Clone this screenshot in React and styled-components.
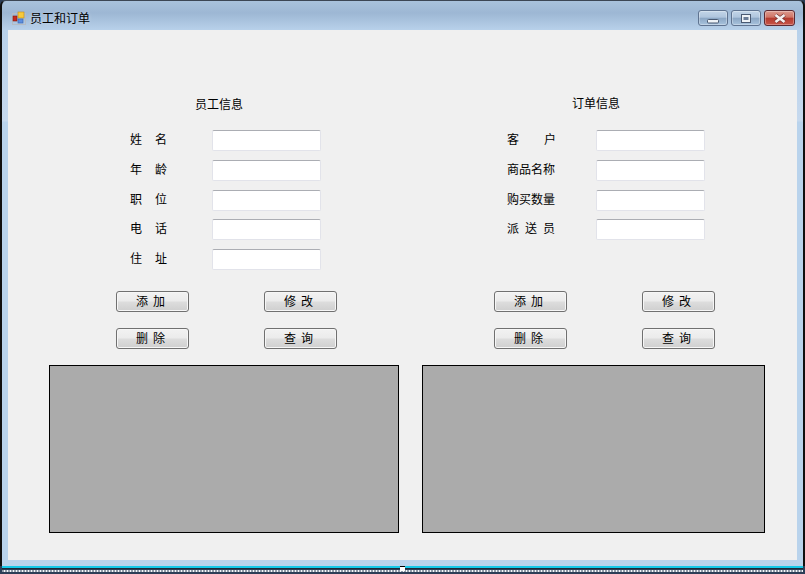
import React from "react";
import styled, { createGlobalStyle } from "styled-components";

const Global = createGlobalStyle`
  html, body {
    margin: 0;
    padding: 0;
    background: #fff;
  }
  body {
    width: 805px;
    height: 574px;
    overflow: hidden;
    font-family: "Noto Sans CJK SC", "Liberation Sans", sans-serif;
    font-size: 12px;
    color: #000;
  }
`;

const employeeFields = [
  { label: "姓名", track: 13 },
  { label: "年龄", track: 13 },
  { label: "职位", track: 13, tight: true },
  { label: "电话", track: 13 },
  { label: "住址", track: 13 },
];

const orderFields = [
  { label: "客户", track: 25 },
  { label: "商品名称", track: 0 },
  { label: "购买数量", track: 0, tight: true },
  { label: "派送员", track: 6 },
];

const Screen = styled.div`
  position: relative;
  width: 805px;
  height: 574px;
  display: flex;
  flex-direction: column;
  background: #2c3e57;
`;

const Frame = styled.div`
  width: 805px;
  height: 566px;
  box-sizing: border-box;
  display: flex;
  flex-direction: column;
  border-top: 1px solid #3c4654;
  border-left: 2px solid #101010;
  border-right: 2px solid #101010;
  border-radius: 6px 6px 0 0;
  padding-left: 6px;
  padding-right: 6px;
  background: linear-gradient(
    180deg,
    #a9c2dc 0,
    #9db7d4 12px,
    #b8d1ea 29px,
    #c6d9ee 120px,
    #b9d3ec 121px,
    #b9d3ec 100%
  );
`;

const TitleBar = styled.div`
  height: 29px;
  display: flex;
  align-items: center;
  padding: 5px 2px 0 4px;
  box-sizing: border-box;
`;

const AppIcon = styled.svg`
  width: 14px;
  height: 14px;
  margin-right: 4px;
  flex: none;
`;

const Caption = styled.span`
  flex: 1;
  line-height: 16px;
  color: #000;
  text-shadow: 0 0 4px rgba(255, 255, 255, 0.45);
`;

const CaptionButtons = styled.div`
  display: flex;
  gap: 3px;
`;

const CaptionButton = styled.div`
  width: ${(p) => p.$w}px;
  height: 16px;
  box-sizing: border-box;
  display: flex;
  align-items: center;
  justify-content: center;
  border: 1px solid ${(p) => (p.$close ? "#5b2a33" : "#5f7390")};
  border-radius: 3px;
  box-shadow: inset 0 0 0 1px rgba(255, 255, 255, 0.3);
  background: ${(p) =>
    p.$close
      ? "linear-gradient(180deg, #dd9a8e 0, #cf7466 45%, #b43a2e 50%, #c8564a 100%)"
      : "linear-gradient(180deg, #c3d5e8 0, #afc5dd 45%, #8ba6c4 50%, #a8c3dd 100%)"};

  svg {
    margin-top: ${(p) => p.$glyphDrop || 0}px;
  }
`;

const Client = styled.main`
  width: 789px;
  height: 530px;
  display: flex;
  flex-direction: column;
  background: #f0f0f0;
`;

const Forms = styled.div`
  display: grid;
  grid-template-columns: 378px 1fr;
`;

const Panel = styled.section`
  padding-top: ${(p) => p.$top}px;
`;

const PanelTitle = styled.h2`
  margin: 0 0 ${(p) => p.$below}px ${(p) => p.$left}px;
  font-size: 12px;
  font-weight: 400;
  line-height: 14px;
`;

const FieldList = styled.div`
  height: 161px;
  display: flex;
  flex-direction: column;
`;

const FieldRow = styled.label`
  display: flex;
  align-items: center;
  height: 21px;
  margin-bottom: ${(p) => (p.$tight ? 8 : 9)}px;
  padding-left: ${(p) => p.$left}px;
`;

const FieldLabel = styled.span`
  width: ${(p) => p.$w}px;
  flex: none;
  padding-bottom: 5px;
  letter-spacing: ${(p) => p.$track}px;
  white-space: nowrap;
`;

const TextBox = styled.input`
  width: 109px;
  height: 21px;
  box-sizing: border-box;
  margin: 0;
  padding: 0;
  background: #fff;
  border: 1px solid #e2e3ea;
  border-top-color: #abadb3;
  border-radius: 2px;
  outline: none;
`;

const Actions = styled.div`
  display: grid;
  grid-template-columns: 73px 73px;
  column-gap: 75px;
  row-gap: 16px;
  padding-left: 108px;
`;

const Action = styled.button`
  width: 73px;
  height: 21px;
  box-sizing: border-box;
  margin: 0;
  padding: 0 0 1px 1px;
  font: inherit;
  color: #000;
  letter-spacing: 5px;
  line-height: 16px;
  border: 1px solid #707070;
  border-radius: 3px;
  box-shadow: inset 0 0 0 1px #f6f6f6;
  background: linear-gradient(180deg, #f2f2f2 0, #ebebeb 48%, #dddddd 52%, #cfcfcf 100%);
`;

const Grids = styled.div`
  display: flex;
  gap: 23px;
  padding-left: 41px;
  margin-top: 16px;
`;

const GridView = styled.div`
  width: ${(p) => p.$w}px;
  height: 168px;
  box-sizing: border-box;
  background: #ababab;
  border: 1px solid #000;
`;

const BottomEdge = styled.div`
  height: 8px;
  display: flex;
  flex-direction: column;
  margin: 0 2px;
`;

const CyanLine = styled.div`
  height: 1.5px;
  background: #14c8e8;
`;

const DarkLine = styled.div`
  height: 1px;
  background: #1c2a3a;
`;

const Dots = styled.div`
  height: 2px;
  margin-top: 1px;
  background: repeating-linear-gradient(90deg, #8f9aa8 0 2px, #f4f6f8 2px 3px);
`;

const Handle = styled.div`
  position: absolute;
  left: 400px;
  top: 566px;
  width: 5px;
  height: 4px;
  background: #fff;
  border-top: 1px solid #000;
`;

const Fields = ({ items, left, labelWidth }) => (
  <FieldList>
    {items.map((f) => (
      <FieldRow key={f.label} $left={left} $tight={f.tight}>
        <FieldLabel $w={labelWidth} $track={f.track}>{f.label}</FieldLabel>
        <TextBox type="text" />
      </FieldRow>
    ))}
  </FieldList>
);

const Buttons = () => (
  <Actions>
    <Action>添加</Action>
    <Action>修改</Action>
    <Action>删除</Action>
    <Action>查询</Action>
  </Actions>
);

export default function App() {
  return (
    <Screen>
      <Global />
      <Frame>
        <TitleBar>
          <AppIcon viewBox="0 0 14 14">
            <rect x="0.5" y="2.5" width="13" height="11" fill="none" stroke="#b5bcc4" />
            <rect x="1" y="5" width="4" height="5" fill="#c62a1e" stroke="#7c1b14" strokeWidth="0.6" />
            <rect x="6" y="1" width="6" height="6" fill="#f6c93c" stroke="#c58c12" strokeWidth="0.6" />
            <rect x="6" y="8" width="5" height="4" fill="#5c8fe0" stroke="#3a62a8" strokeWidth="0.6" />
          </AppIcon>
          <Caption>员工和订单</Caption>
          <CaptionButtons>
            <CaptionButton $w={30} $glyphDrop={6}>
              <svg width="12" height="5" viewBox="0 0 12 5">
                <rect x="0.5" y="0.5" width="11" height="3.5" rx="1" fill="#eef2f6" stroke="#4a5a72" />
              </svg>
            </CaptionButton>
            <CaptionButton $w={30}>
              <svg width="10" height="9" viewBox="0 0 10 9">
                <rect x="0.5" y="0.5" width="9" height="8" fill="#eef2f6" stroke="#4a5a72" />
                <rect x="2.5" y="3" width="5" height="3" fill="#6a7c96" />
              </svg>
            </CaptionButton>
            <CaptionButton $w={31} $close>
              <svg width="14" height="11" viewBox="0 0 14 11">
                <path d="M2.5 2 L11.5 9 M11.5 2 L2.5 9" stroke="#6b2a2a" strokeWidth="4" />
                <path d="M2.5 2 L11.5 9 M11.5 2 L2.5 9" stroke="#f4eeee" strokeWidth="2.8" />
              </svg>
            </CaptionButton>
          </CaptionButtons>
        </TitleBar>
        <Client>
          <Forms>
            <Panel $top={67}>
              <PanelTitle $left={187} $below={19}>员工信息</PanelTitle>
              <Fields items={employeeFields} left={122} labelWidth={82} />
              <Buttons />
            </Panel>
            <Panel $top={66}>
              <PanelTitle $left={186} $below={20}>订单信息</PanelTitle>
              <Fields items={orderFields} left={121} labelWidth={89} />
              <Buttons />
            </Panel>
          </Forms>
          <Grids>
            <GridView $w={350} />
            <GridView $w={343} />
          </Grids>
        </Client>
      </Frame>
      <BottomEdge>
        <CyanLine />
        <DarkLine />
        <Dots />
      </BottomEdge>
      <Handle />
    </Screen>
  );
}
